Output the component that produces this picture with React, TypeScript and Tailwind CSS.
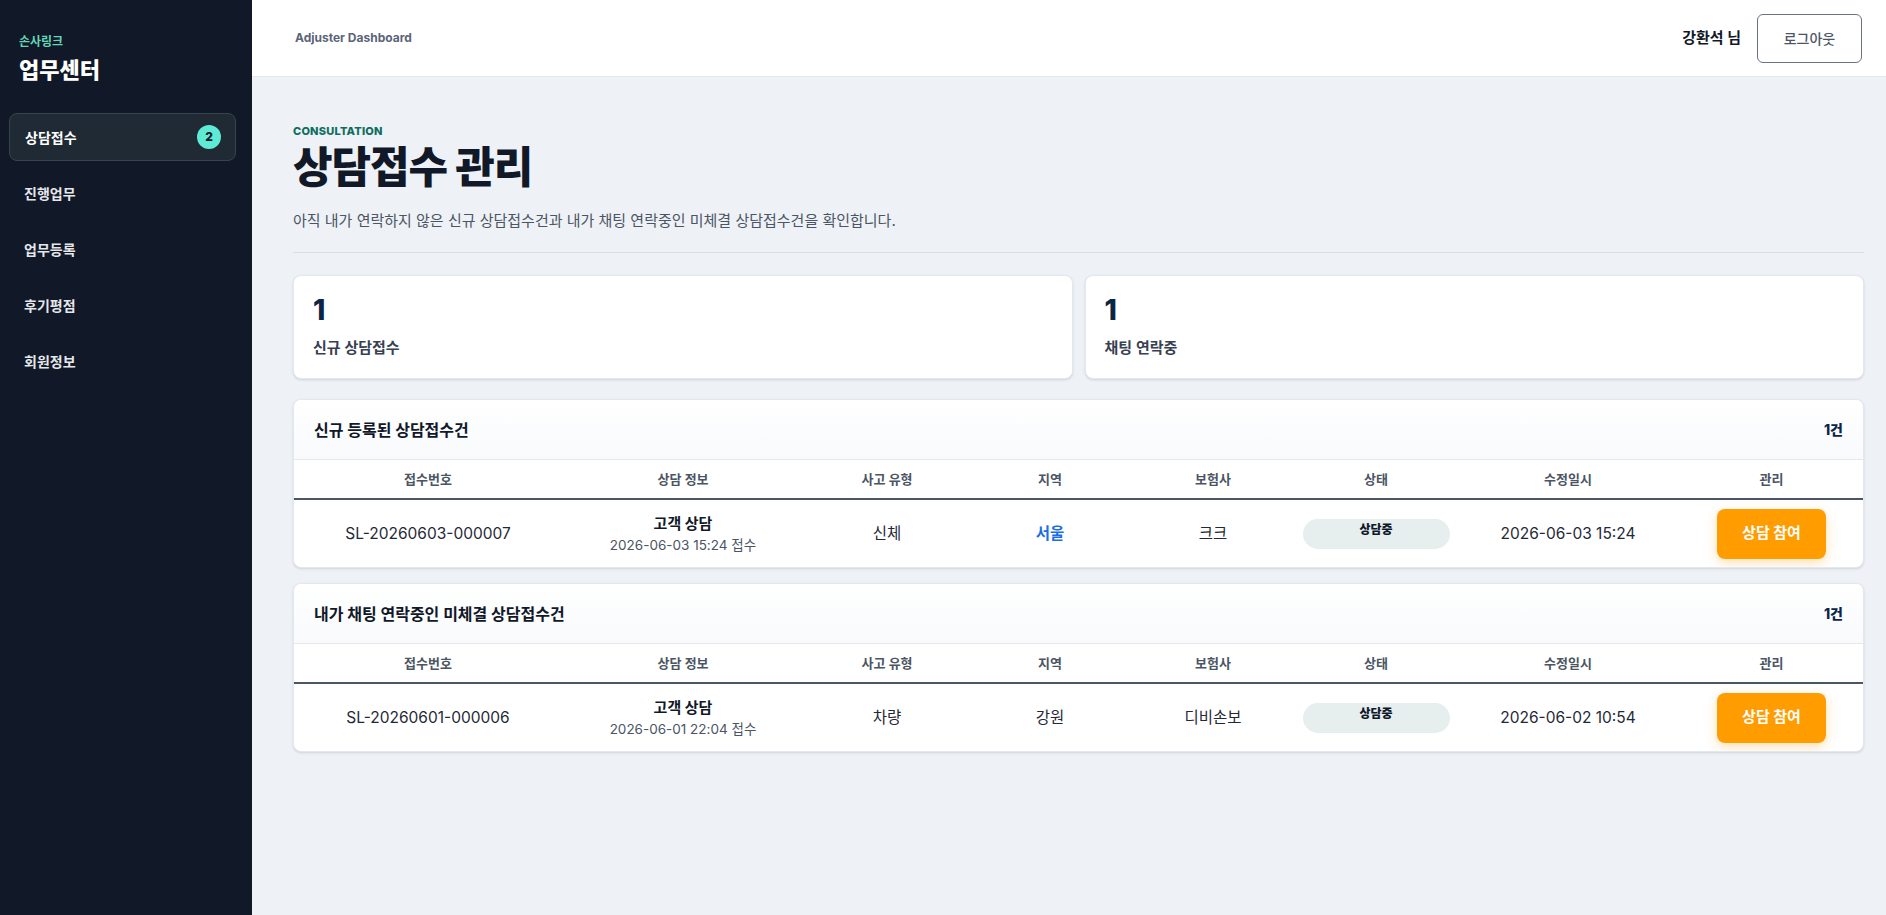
import React from 'react';

/* 손해사정사 업무센터 — 상담접수 관리 화면 */

const FONT = { fontFamily: 'Inter, "Noto Sans CJK KR", "Noto Sans", sans-serif' };

const NAV = ['상담접수', '진행업무', '업무등록', '후기평점', '회원정보'];

const COLS = ['접수번호', '상담 정보', '사고 유형', '지역', '보험사', '상태', '수정일시', '관리'];
const GRID = 'grid grid-cols-[268px_242px_166px_160px_166px_160px_224px_1fr]';

type Row = {
  no: string;
  received: string;
  kind: string;
  region: string;
  regionLink?: boolean;
  insurer: string;
  updated: string;
};

const NEW_ROWS: Row[] = [
  {
    no: 'SL-20260603-000007',
    received: '2026-06-03 15:24 접수',
    kind: '신체',
    region: '서울',
    regionLink: true,
    insurer: '크크',
    updated: '2026-06-03 15:24',
  },
];

const CHAT_ROWS: Row[] = [
  {
    no: 'SL-20260601-000006',
    received: '2026-06-01 22:04 접수',
    kind: '차량',
    region: '강원',
    insurer: '디비손보',
    updated: '2026-06-02 10:54',
  },
];

function Sidebar() {
  return (
    <aside className="flex w-[252px] shrink-0 flex-col bg-[#111827] pl-[9px] pr-[16px]">
      <div className="px-[10px] pt-[34px]">
        <p className="text-[12px] font-bold leading-4 text-[#63d6b9]">손사링크</p>
        <p className="mt-[6px] text-[22px] font-extrabold leading-7 text-white">업무센터</p>
      </div>
      <nav className="mt-[29px] flex flex-col gap-2">
        {NAV.map((n, i) =>
          i === 0 ? (
            <div
              key={n}
              className="flex h-12 items-center justify-between rounded-lg border border-[#34454d] bg-[#1f2a35] pl-[15px] pr-[14px]"
            >
              <span className="text-[14px] font-bold text-white">{n}</span>
              <span className="flex h-6 w-6 items-center justify-center rounded-full bg-[#5eead4] text-[12px] font-extrabold text-[#0f172a]">
                2
              </span>
            </div>
          ) : (
            <div key={n} className="flex h-12 items-center pl-[15px]">
              <span className="text-[14px] font-bold text-[#e5e7eb]">{n}</span>
            </div>
          )
        )}
      </nav>
    </aside>
  );
}

function Topbar() {
  return (
    <header className="flex h-[77px] shrink-0 items-center justify-between border-b border-[#e2e8f0] bg-white pl-[43px] pr-[24px]">
      <span className="text-[12px] font-bold text-[#5b6478]">Adjuster Dashboard</span>
      <div className="flex items-center gap-4">
        <span className="text-[15px] font-bold text-[#111827]">강환석 님</span>
        <button className="h-[49px] w-[105px] rounded-md border border-[#6b7280] bg-white text-[14px] font-medium text-[#4b5563]">
          로그아웃
        </button>
      </div>
    </header>
  );
}

function StatCard({ value, label }: { value: string; label: string }) {
  return (
    <div className="flex h-[104px] flex-col rounded-lg border border-[#e2e8f0] bg-white px-[19px] pt-[18px] shadow-sm">
      <span className="text-[28px] font-extrabold leading-8 text-[#0b2545]">{value}</span>
      <span className="mt-[12px] text-[15px] font-semibold leading-5 text-[#374151]">{label}</span>
    </div>
  );
}

function CaseTable({ title, rows }: { title: string; rows: Row[] }) {
  return (
    <section className="overflow-hidden rounded-lg border border-[#e2e8f0] bg-white shadow-sm">
      <div className="flex h-[60px] items-center justify-between border-b border-[#e5e7eb] bg-gradient-to-b from-white to-[#f8fafc] px-5">
        <h2 className="text-[16px] font-bold text-[#111827]">{title}</h2>
        <span className="text-[14px] font-extrabold text-[#0b2545]">{rows.length}건</span>
      </div>
      <div className={`${GRID} h-[40px] items-center border-b-2 border-[#4b5563] pt-[2px]`}>
        {COLS.map((c) => (
          <span key={c} className="text-center text-[13px] font-semibold text-[#4b5563]">
            {c}
          </span>
        ))}
      </div>
      {rows.map((r) => (
        <div key={r.no} className={`${GRID} h-[67px] items-center text-center text-[15.5px] text-[#1f2937]`}>
          <span>{r.no}</span>
          <div className="flex flex-col items-center">
            <span className="text-[15px] font-bold leading-5 text-[#111827]">고객 상담</span>
            <span className="mt-[3px] text-[13.5px] leading-4 text-[#4b5563]">{r.received}</span>
          </div>
          <span>{r.kind}</span>
          <span className={r.regionLink ? 'font-semibold text-[#1a6ee6]' : ''}>{r.region}</span>
          <span>{r.insurer}</span>
          <div className="flex justify-center">
            <span className="h-[30px] w-[147px] rounded-full bg-[#e6eeee] pt-[3px] text-[12px] font-extrabold leading-4 text-[#0f172a]">
              상담중
            </span>
          </div>
          <span>{r.updated}</span>
          <div className="flex justify-center">
            <button className="h-[50px] w-[109px] rounded-lg bg-[#ff9c00] text-[15px] font-bold text-white shadow-[0_4px_12px_rgba(255,156,0,0.3)]">
              상담 참여
            </button>
          </div>
        </div>
      ))}
    </section>
  );
}

export default function App() {
  return (
    <div className="flex min-h-screen w-full" style={FONT}>
      <Sidebar />
      <div className="flex min-w-0 grow flex-col bg-[#eef1f6]">
        <Topbar />
        <main className="pl-[41px] pr-[22px] pt-[46px] pb-10">
          <p className="text-[11px] font-extrabold leading-4 tracking-[0.02em] text-[#0d6e5f]">CONSULTATION</p>
          <h1 className="mt-[4px] text-[43px] font-extrabold leading-[48px] tracking-tight text-[#111827]">
            상담접수 관리
          </h1>
          <p className="mt-[20px] text-[15px] leading-5 text-[#4b5563]">
            아직 내가 연락하지 않은 신규 상담접수건과 내가 채팅 연락중인 미체결 상담접수건을 확인합니다.
          </p>
          <div className="mt-[21px] h-px bg-[#d8dde5]" />
          <div className="mt-[22px] grid grid-cols-2 gap-3">
            <StatCard value="1" label="신규 상담접수" />
            <StatCard value="1" label="채팅 연락중" />
          </div>
          <div className="mt-5 flex flex-col gap-[15px]">
            <CaseTable title="신규 등록된 상담접수건" rows={NEW_ROWS} />
            <CaseTable title="내가 채팅 연락중인 미체결 상담접수건" rows={CHAT_ROWS} />
          </div>
        </main>
      </div>
    </div>
  );
}
